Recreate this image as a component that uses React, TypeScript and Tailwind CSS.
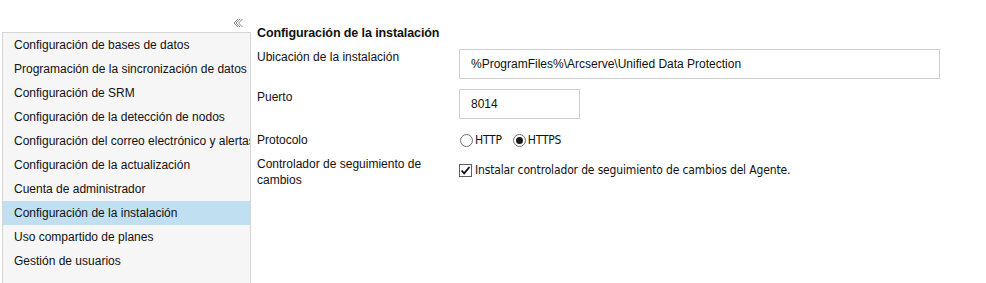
import React from 'react';

const menuItems = [
    'Configuración de bases de datos',
    'Programación de la sincronización de datos',
    'Configuración de SRM',
    'Configuración de la detección de nodos',
    'Configuración del correo electrónico y alertas',
    'Configuración de la actualización',
    'Cuenta de administrador',
    'Configuración de la instalación',
    'Uso compartido de planes',
    'Gestión de usuarios',
];

const SELECTED = 7;

function CollapseIcon() {
    return (
        <svg width="10" height="10" viewBox="0 0 10 10" fill="none" stroke="#8a8a8a" strokeWidth="1">
            <polyline points="5,1 1,5 5,9" />
            <polyline points="7,1 3,5 7,9" />
            <polyline points="9.5,1 5.5,5 9.5,9" />
        </svg>
    );
}

function Radio({ checked, label }: { checked?: boolean; label: string }) {
    return (
        <label className="flex items-center gap-[2px]">
            <span className="w-[13px] h-[13px] rounded-full border border-[#6f6f6f] bg-white flex items-center justify-center">
                {checked && <span className="w-[7px] h-[7px] rounded-full bg-[#1a1a1a]" />}
            </span>
            <span className="text-[12px] font-['DejaVu_Sans_Condensed',sans-serif] tracking-[-0.2px]">{label}</span>
        </label>
    );
}

export default function App() {
    return (
        <div className="w-[986px] h-[283px] bg-white flex text-[#111] font-['Liberation_Sans',Arial,sans-serif] text-[12px] overflow-hidden">
            {/* Left menu */}
            <div className="w-[251px] pl-[2px] flex flex-col shrink-0">
                <div className="h-[32px] flex justify-end items-start pt-[18px] pr-[8px]">
                    <CollapseIcon />
                </div>
                <div className="flex-1 bg-[#f6f6f6] border-l border-t border-r border-[#d4d4d4]">
                    {menuItems.map((item, i) => (
                        <div
                            key={item}
                            className={`h-6 flex items-center pl-[11px] whitespace-nowrap overflow-hidden ${i === SELECTED ? 'bg-[#c0e0f1]' : ''}`}
                        >
                            {item}
                        </div>
                    ))}
                </div>
            </div>

            {/* Settings panel */}
            <div className="flex-1 pl-[6px] pt-[25px]">
                <h2 className="font-bold text-[12.5px] leading-4 tracking-[-0.1px]">Configuración de la instalación</h2>

                <div className="mt-[8px] flex">
                    <div className="w-[202px] leading-4">Ubicación de la instalación</div>
                    <div className="w-[481px] h-[30px] border border-[#cfcfcf] flex items-center pl-[11px]">
                        %ProgramFiles%\Arcserve\Unified Data Protection
                    </div>
                </div>

                <div className="mt-[10px] flex">
                    <div className="w-[202px] leading-4">Puerto</div>
                    <div className="w-[121px] h-[30px] border border-[#cfcfcf] flex items-center pl-[11px]">8014</div>
                </div>

                <div className="mt-[12px] flex items-center">
                    <div className="w-[203px] leading-4">Protocolo</div>
                    <div className="flex items-center gap-[11px]">
                        <Radio label="HTTP" />
                        <Radio checked label="HTTPS" />
                    </div>
                </div>

                <div className="mt-[7px] flex items-start">
                    <div className="w-[202px] leading-4">
                        Controlador de seguimiento de
                        <br />
                        cambios
                    </div>
                    <label className="flex items-center gap-[3px] pt-[5px]">
                        <span className="w-[13px] h-[13px] border border-[#5f5f5f] bg-white flex items-center justify-center">
                            <svg width="11" height="11" viewBox="0 0 11 11" fill="none" stroke="#111" strokeWidth="1.8">
                                <polyline points="1.5,5.5 4.2,8.3 9.5,2" />
                            </svg>
                        </span>
                        <span className="text-[12px] font-['DejaVu_Sans_Condensed',sans-serif] tracking-[-0.15px]">
                            Instalar controlador de seguimiento de cambios del Agente.
                        </span>
                    </label>
                </div>
            </div>
        </div>
    );
}
